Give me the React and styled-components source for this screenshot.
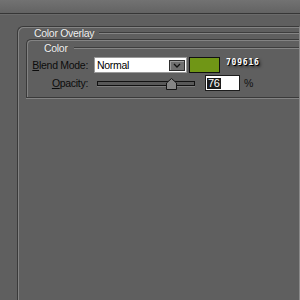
import React from 'react';
import styled, { createGlobalStyle } from 'styled-components';

const GlobalStyle = createGlobalStyle`
  html, body {
    margin: 0;
    padding: 0;
    background: #5f5f5f;
    overflow: hidden;
  }
  body {
    font-family: "Liberation Sans", Arial, sans-serif;
    font-size: 10px;
    letter-spacing: -0.3px;
  }
`;

const Page = styled.div`
  width: 300px;
  height: 300px;
  display: flex;
  flex-direction: column;
`;

const TopBar = styled.div`
  height: 13px;
  flex: none;
  background: linear-gradient(#727272, #636363);
  border-bottom: 1px solid #363636;
  box-shadow: 0 1px 0 #6a6a6a;
`;

const Frame = styled.div`
  flex: 1;
  margin: 12px 0 0 17px;
  border-top: 1px solid #3a3a3a;
  border-left: 1px solid #3a3a3a;
  border-right: 1px solid #8a8a8a;
  border-top-left-radius: 6px;
  box-shadow: inset 1px 1px 0 #838383;
`;

const TitleRow = styled.div`
  display: flex;
  align-items: center;
  height: ${(p) => p.$h}px;
  padding-left: ${(p) => p.$pad}px;
`;

const Title = styled.span`
  color: #f2f2f2;
  font-size: 10.5px;
  text-shadow: 0 0 1px rgba(40, 40, 40, 0.6);
`;

const Rule = styled.div`
  flex: 1;
  margin-left: ${(p) => p.$gap}px;
  border-top: 1px solid #3e3e3e;
  border-bottom: 1px solid #858585;
`;

const Group = styled.div`
  margin-left: 8px;
  height: 57px;
  border-top: 1px solid #3a3a3a;
  border-left: 1px solid #3a3a3a;
  border-bottom: 1px solid #3a3a3a;
  border-top-left-radius: 5px;
  box-shadow: inset 1px 1px 0 #838383, 0 1px 0 #838383;
`;

const Row = styled.div`
  display: flex;
  align-items: center;
  height: 16px;
  margin-top: ${(p) => p.$top}px;
`;

const Label = styled.label`
  width: 61px;
  flex: none;
  text-align: right;
  color: #0c0c0c;
  font-size: 10.5px;
  u {
    text-decoration: underline;
    text-underline-offset: 1px;
  }
`;

const Select = styled.div`
  width: 93px;
  height: 16px;
  margin-left: 6px;
  box-sizing: border-box;
  background: #fff;
  border: 1px solid #9a9a9a;
  display: flex;
  align-items: center;
  justify-content: space-between;
  padding: 0 0 0 2px;
  color: #000;
  font-size: 10.5px;
`;

const SelectButton = styled.div`
  width: 16px;
  height: 11px;
  box-sizing: border-box;
  background: #6f6f6f;
  border: 1px solid #2e2e2e;
  box-shadow: inset 1px 1px 0 #9a9a9a;
  display: flex;
  align-items: center;
  justify-content: center;
  margin-right: 1px;
`;

const Swatch = styled.div`
  width: 31px;
  height: 16px;
  margin-left: 2px;
  box-sizing: border-box;
  border: 1px solid #111;
  background: ${(p) => p.$color};
`;

const HexText = styled.span`
  margin-left: 6px;
  margin-top: -5px;
  font-family: "DejaVu Sans Mono", monospace;
  font-weight: bold;
  font-size: 8px;
  letter-spacing: 0.8px;
  color: #fff;
  text-shadow: 1px 1px 0 #000, 2px 2px 3px rgba(0, 0, 0, 0.7);
`;

const Track = styled.div`
  position: relative;
  width: 98px;
  height: 5px;
  margin-left: 9px;
  box-sizing: border-box;
  border: 1px solid #121212;
  background: #595959;
  box-shadow: 0 1px 0 #7c7c7c;
`;

const Thumb = styled.svg`
  position: absolute;
  top: -4px;
  margin-left: -5px;
`;

const NumberBox = styled.div`
  width: 35px;
  height: 16px;
  margin-left: 10px;
  box-sizing: border-box;
  background: #fff;
  border: 1px solid #1c1c1c;
  display: flex;
  align-items: center;
  padding-left: 1px;
`;

const Selected = styled.span`
  background: #1c1c1c;
  color: #fff;
  font-size: 11px;
  line-height: 11px;
  padding: 0 1px;
`;

const Unit = styled.span`
  margin-left: 4px;
  color: #111;
  font-size: 10.5px;
`;

const Chevron = () => (
  <svg width="8" height="5" viewBox="0 0 8 5">
    <polyline points="1,1 4,4 7,1" fill="none" stroke="#111" strokeWidth="1.3" />
  </svg>
);

const App = () => {
  const opacity = 76;
  return (
    <Page>
      <GlobalStyle />
      <TopBar />
      <Frame>
        <TitleRow $h={12} $pad={16}>
          <Title>Color Overlay</Title>
          <Rule $gap={5} />
        </TitleRow>
        <Group>
          <TitleRow $h={16} $pad={17}>
            <Title>Color</Title>
            <Rule $gap={6} />
          </TitleRow>
          <Row $top={1}>
            <Label>
              <u>B</u>lend Mode:
            </Label>
            <Select>
              Normal
              <SelectButton>
                <Chevron />
              </SelectButton>
            </Select>
            <Swatch $color="#709616" />
            <HexText>709616</HexText>
          </Row>
          <Row $top={2}>
            <Label>
              <u>O</u>pacity:
            </Label>
            <Track>
              <Thumb width="11" height="12" viewBox="0 0 11 12" style={{ left: `${opacity}%` }}>
                <path d="M0.5 11.5 V5 L5.5 0.5 L10.5 5 V11.5 Z" fill="#858585" stroke="#151515" />
              </Thumb>
            </Track>
            <NumberBox>
              <Selected>{opacity}</Selected>
            </NumberBox>
            <Unit>%</Unit>
          </Row>
        </Group>
      </Frame>
    </Page>
  );
};

export default App;
